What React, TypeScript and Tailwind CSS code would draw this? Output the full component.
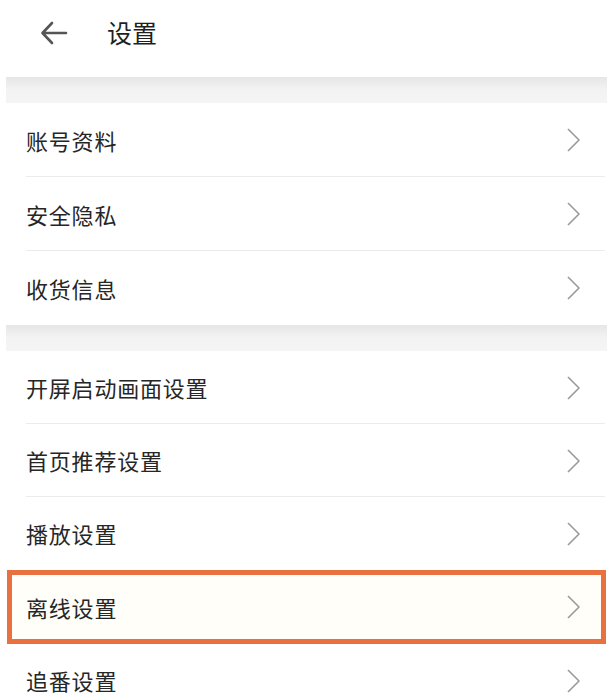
import React from "react";

const font = { fontFamily: '"Noto Sans CJK SC", "Noto Sans", sans-serif' };

const Chevron = () => (
  <svg width="16" height="26" viewBox="0 0 16 26" fill="none">
    <polyline points="3,2 14,13 3,24" stroke="#9a9a9a" strokeWidth="1.6" strokeLinejoin="round" />
  </svg>
);

const Row = ({ label, divider = true, h = "h-[73px]" }: { label: string; divider?: boolean; h?: string }) => (
  <div className={`relative flex ${h} items-center justify-between pl-[26px] pr-[32px] bg-white`}>
    <span className="text-[22px] text-[#262626] tracking-[0.8px]">{label}</span>
    <Chevron />
    {divider && <div className="absolute bottom-0 left-[26px] right-[8px] h-px bg-[#ececec]" />}
  </div>
);

const Band = ({ h }: { h: string }) => (
  <div className={`${h} mx-[6px] bg-gradient-to-b from-[#e6e6e6] via-[#f3f3f3] to-[#f5f5f5]`} />
);

export default function App() {
  return (
    <div className="w-[613px] h-[698px] overflow-hidden bg-white" style={font}>
      <div className="flex h-[77px] items-center pb-[12px] pl-[40px]">
        <svg width="28" height="24" viewBox="0 0 28 24" fill="none">
          <path d="M26 12H3M12 2L2.5 12L12 22" stroke="#555" strokeWidth="2.6" strokeLinecap="round" strokeLinejoin="round" />
        </svg>
        <span className="ml-[39px] text-[25px] text-[#1f1f1f]">设置</span>
      </div>
      <Band h="h-[26px]" />
      <Row label="账号资料" h="h-[74px]" />
      <Row label="安全隐私" h="h-[74px]" />
      <Row label="收货信息" divider={false} h="h-[74px]" />
      <Band h="h-[26px]" />
      <Row label="开屏启动画面设置" />
      <Row label="首页推荐设置" />
      <Row label="播放设置" divider={false} />
      <div className="mx-[7px] border-[5px] border-[#e9713f] bg-[#fffef8]">
        <div className="flex h-[64px] items-center justify-between pl-[14px] pr-[20px]">
          <span className="text-[22px] text-[#262626] tracking-[0.8px]">离线设置</span>
          <Chevron />
        </div>
      </div>
      <Row label="追番设置" divider={false} />
    </div>
  );
}
